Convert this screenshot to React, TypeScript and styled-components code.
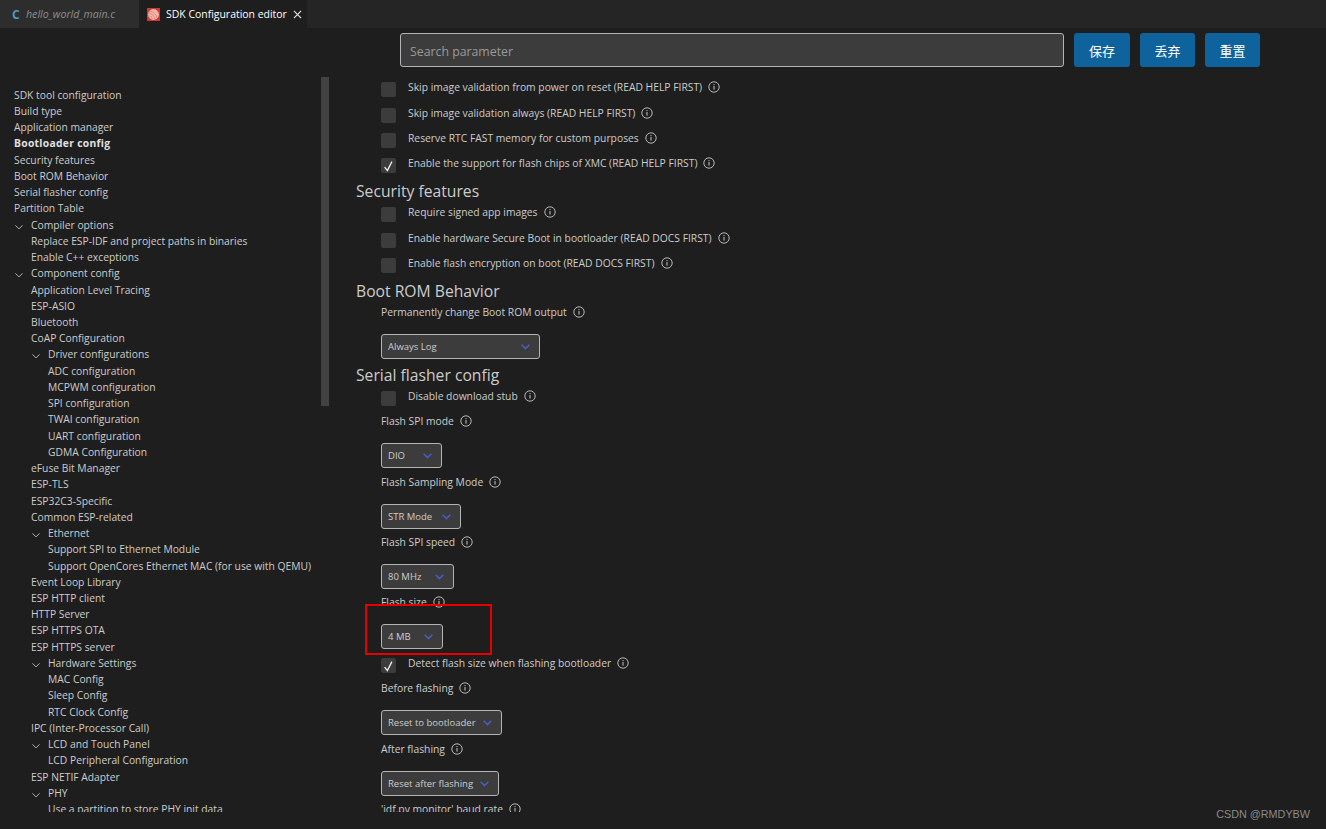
import React from "react";
import styled, { createGlobalStyle } from "styled-components";

const GlobalStyle = createGlobalStyle`
  html, body {
    margin: 0;
    padding: 0;
    height: 100%;
    background: #1e1e1e;
    overflow: hidden;
  }
`;

type TreeItem = { label: string; level: number; open?: boolean; bold?: boolean };

const tree: TreeItem[] = [
  { label: "SDK tool configuration", level: 0 },
  { label: "Build type", level: 0 },
  { label: "Application manager", level: 0 },
  { label: "Bootloader config", level: 0, bold: true },
  { label: "Security features", level: 0 },
  { label: "Boot ROM Behavior", level: 0 },
  { label: "Serial flasher config", level: 0 },
  { label: "Partition Table", level: 0 },
  { label: "Compiler options", level: 1, open: true },
  { label: "Replace ESP-IDF and project paths in binaries", level: 1 },
  { label: "Enable C++ exceptions", level: 1 },
  { label: "Component config", level: 1, open: true },
  { label: "Application Level Tracing", level: 1 },
  { label: "ESP-ASIO", level: 1 },
  { label: "Bluetooth", level: 1 },
  { label: "CoAP Configuration", level: 1 },
  { label: "Driver configurations", level: 2, open: true },
  { label: "ADC configuration", level: 2 },
  { label: "MCPWM configuration", level: 2 },
  { label: "SPI configuration", level: 2 },
  { label: "TWAI configuration", level: 2 },
  { label: "UART configuration", level: 2 },
  { label: "GDMA Configuration", level: 2 },
  { label: "eFuse Bit Manager", level: 1 },
  { label: "ESP-TLS", level: 1 },
  { label: "ESP32C3-Specific", level: 1 },
  { label: "Common ESP-related", level: 1 },
  { label: "Ethernet", level: 2, open: true },
  { label: "Support SPI to Ethernet Module", level: 2 },
  { label: "Support OpenCores Ethernet MAC (for use with QEMU)", level: 2 },
  { label: "Event Loop Library", level: 1 },
  { label: "ESP HTTP client", level: 1 },
  { label: "HTTP Server", level: 1 },
  { label: "ESP HTTPS OTA", level: 1 },
  { label: "ESP HTTPS server", level: 1 },
  { label: "Hardware Settings", level: 2, open: true },
  { label: "MAC Config", level: 2 },
  { label: "Sleep Config", level: 2 },
  { label: "RTC Clock Config", level: 2 },
  { label: "IPC (Inter-Processor Call)", level: 1 },
  { label: "LCD and Touch Panel", level: 2, open: true },
  { label: "LCD Peripheral Configuration", level: 2 },
  { label: "ESP NETIF Adapter", level: 1 },
  { label: "PHY", level: 2, open: true },
  { label: "Use a partition to store PHY init data", level: 2 },
];

const InfoIcon = () => (
  <InfoSvg viewBox="0 0 12 12" width="12" height="12">
    <circle cx="6" cy="6" r="5.2" fill="none" stroke="#c8c8c8" strokeWidth="0.9" />
    <rect x="5.5" y="5" width="1" height="3.6" fill="#c8c8c8" />
    <rect x="5.5" y="3.1" width="1" height="1" fill="#c8c8c8" />
  </InfoSvg>
);

const Chevron = ({ color, size, weight }: { color: string; size: number; weight: number }) => (
  <svg viewBox="0 0 10 10" width={size} height={size}>
    <path d="M1.5 3.4 L5 6.9 L8.5 3.4" fill="none" stroke={color} strokeWidth={weight} />
  </svg>
);

const Check = ({ checked, children }: { checked?: boolean; children: string }) => (
  <CheckRow>
    <CheckBox>
      {checked && (
        <svg viewBox="0 0 16 16" width="16" height="16">
          <path d="M3.6 9.2 L6.4 12.6 L10.9 3.6" fill="none" stroke="#f2f2f2" strokeWidth="1.3" />
        </svg>
      )}
    </CheckBox>
    <CheckText>{children}</CheckText>
    <InfoIcon />
  </CheckRow>
);

const Dropdown = ({
  label,
  value,
  width,
  gap = 3.3,
}: {
  label: string;
  value: string;
  width: number;
  gap?: number;
}) => (
  <DropdownBlock>
    <FieldLabel>
      {label}
      <InfoIcon />
    </FieldLabel>
    <SelectBox $width={width} $gap={gap}>
      <span>{value}</span>
      <Chevron color="#4a5cc0" size={11} weight={1.4} />
    </SelectBox>
  </DropdownBlock>
);

const EspLogo = () => (
  <svg viewBox="0 0 14 14" width="13" height="13">
    <rect width="14" height="14" fill="#cf3a2d" />
    <circle cx="7" cy="7" r="5.8" fill="#f0b6ae" />
    <path d="M3 3.6 A8 8 0 0 1 10.6 11 M2.2 6 A6 6 0 0 1 8.2 12 M2.6 8.6 A3.6 3.6 0 0 1 5.6 11.6" fill="none" stroke="#e07a6c" strokeWidth="0.8" />
  </svg>
);

export default function App() {
  return (
    <Page>
      <GlobalStyle />
      <TabBar>
        <Tab>
          <CIcon>C</CIcon>
          <TabName>hello_world_main.c</TabName>
        </Tab>
        <ActiveTab>
          <EspLogo />
          <ActiveName>SDK Configuration editor</ActiveName>
          <svg viewBox="0 0 10 10" width="9" height="9">
            <path d="M1 1 L9 9 M9 1 L1 9" stroke="#e8e8e8" strokeWidth="1.2" />
          </svg>
        </ActiveTab>
      </TabBar>

      <Toolbar>
        <SearchBox>Search parameter</SearchBox>
        <ActionButton $width={56}>保存</ActionButton>
        <ActionButton $width={55}>丢弃</ActionButton>
        <ActionButton $width={55}>重置</ActionButton>
      </Toolbar>

      <Body>
        <Sidebar>
          <TreeList>
            {tree.map((item) => (
              <TreeRow key={item.label} $level={item.level} $bold={item.bold}>
                {item.open && (
                  <TreeChevron>
                    <Chevron color="#b4b4b4" size={10} weight={1} />
                  </TreeChevron>
                )}
                {item.label}
              </TreeRow>
            ))}
          </TreeList>
          <ScrollThumb />
        </Sidebar>

        <Content>
          <Check>Skip image validation from power on reset (READ HELP FIRST)</Check>
          <Check>Skip image validation always (READ HELP FIRST)</Check>
          <Check>Reserve RTC FAST memory for custom purposes</Check>
          <Check checked>Enable the support for flash chips of XMC (READ HELP FIRST)</Check>
          <Heading>Security features</Heading>
          <Check>Require signed app images</Check>
          <Check>Enable hardware Secure Boot in bootloader (READ DOCS FIRST)</Check>
          <Check>Enable flash encryption on boot (READ DOCS FIRST)</Check>
          <Heading>Boot ROM Behavior</Heading>
          <Dropdown label="Permanently change Boot ROM output" value="Always Log" width={159} />
          <Heading>Serial flasher config</Heading>
          <Check>Disable download stub</Check>
          <Dropdown label="Flash SPI mode" value="DIO" width={61} />
          <Dropdown label="Flash Sampling Mode" value="STR Mode" width={80} />
          <Dropdown label="Flash SPI speed" value="80 MHz" width={73} />
          <Dropdown label="Flash size" value="4 MB" width={62} />
          <Check checked>Detect flash size when flashing bootloader</Check>
          <Dropdown label="Before flashing" value="Reset to bootloader" width={121} gap={3.7} />
          <Dropdown label="After flashing" value="Reset after flashing" width={118} />
          <FieldLabel $indent>
            'idf.py monitor' baud rate
            <InfoIcon />
          </FieldLabel>
        </Content>
      </Body>

      <Highlight />
      <Watermark>CSDN @RMDYBW</Watermark>
    </Page>
  );
}

const uiFont = `"Open Sans", "Noto Sans", "Noto Sans CJK SC", sans-serif`;

const Page = styled.div`
  position: relative;
  width: 1326px;
  height: 829px;
  background: #1e1e1e;
  color: #cccccc;
  font-family: ${uiFont};
  overflow: hidden;
`;

const TabBar = styled.div`
  display: flex;
  height: 28px;
  background: #252526;
`;

const Tab = styled.div`
  display: flex;
  align-items: center;
  width: 139px;
  padding-left: 12px;
  box-sizing: border-box;
  background: #2d2d2d;
`;

const ActiveTab = styled.div`
  display: flex;
  align-items: center;
  width: 168px;
  padding-left: 8px;
  box-sizing: border-box;
  background: #1e1e1e;
  white-space: nowrap;
`;

const CIcon = styled.span`
  width: 14px;
  font-size: 12px;
  font-weight: 700;
  color: #519aba;
`;

const TabName = styled.span`
  font-size: 10.6px;
  font-style: italic;
  color: #8d8d8d;
`;

const ActiveName = styled.span`
  margin: 0 6px 0 6px;
  font-size: 10.45px;
  color: #ffffff;
`;

const Toolbar = styled.div`
  display: flex;
  gap: 10px;
  height: 34px;
  margin-top: 5px;
  padding-left: 400px;
`;

const SearchBox = styled.div`
  display: flex;
  align-items: center;
  width: 664px;
  padding: 2px 0 0 9px;
  box-sizing: border-box;
  background: #3c3c3c;
  border: 1px solid #b4b4b4;
  border-radius: 3px;
  font-size: 12.3px;
  color: #9a9a9a;
`;

const ActionButton = styled.div<{ $width: number }>`
  display: flex;
  align-items: center;
  justify-content: center;
  width: ${(p) => p.$width}px;
  background: #0e639c;
  border-radius: 3px;
  font-size: 13px;
  color: #ffffff;
`;

const Body = styled.div`
  display: flex;
  height: 735px;
  margin-top: 10px;
`;

const Sidebar = styled.div`
  position: relative;
  width: 329px;
  height: 735px;
  overflow: hidden;
`;

const TreeList = styled.div`
  padding-top: 9.72px;
`;

const TreeRow = styled.div<{ $level: number; $bold?: boolean }>`
  position: relative;
  height: 16.235px;
  padding-left: ${(p) => 14 + p.$level * 17}px;
  font-size: 10.3px;
  line-height: 16px;
  white-space: nowrap;
  font-weight: ${(p) => (p.$bold ? 700 : 400)};
  letter-spacing: ${(p) => (p.$bold ? "0.3px" : "0")};
  color: ${(p) => (p.$bold ? "#e0e0e0" : "#cccccc")};
`;

const TreeChevron = styled.span`
  position: absolute;
  top: 3px;
  margin-left: -17px;
`;

const ScrollThumb = styled.div`
  position: absolute;
  top: 0;
  right: 0;
  width: 8px;
  height: 329px;
  background: #424242;
`;

const Content = styled.div`
  flex: 1;
  padding: 0.3px 0 0 27px;
  overflow: hidden;
`;

const CheckRow = styled.div`
  display: flex;
  align-items: flex-start;
  height: 25.3px;
  padding-left: 25px;
  font-size: 10.32px;
  line-height: 20px;
`;

const CheckBox = styled.div`
  flex: none;
  width: 15px;
  height: 15px;
  margin-top: 5px;
  background: #3c3c3c;
  border-radius: 2px;
`;

const CheckText = styled.span`
  margin-left: 12px;
  color: #cccccc;
`;

const InfoSvg = styled.svg`
  flex: none;
  margin: 4px 0 0 6px;
`;

const Heading = styled.div`
  height: 23.8px;
  font-size: 15.7px;
  line-height: 27px;
  color: #cccccc;
`;

const DropdownBlock = styled.div`
  padding-left: 25px;
`;

const FieldLabel = styled.div<{ $indent?: boolean }>`
  display: flex;
  align-items: flex-start;
  height: 32px;
  padding-left: ${(p) => (p.$indent ? 25 : 0)}px;
  font-size: 10.32px;
  line-height: 20px;
  color: #cccccc;
`;

const SelectBox = styled.div<{ $width: number; $gap: number }>`
  display: flex;
  align-items: center;
  justify-content: space-between;
  width: ${(p) => p.$width}px;
  height: 25px;
  margin-bottom: ${(p) => p.$gap}px;
  padding: 0 8px 0 6px;
  box-sizing: border-box;
  background: #3c3c3c;
  border: 1px solid #b4b4b4;
  border-radius: 3px;
  font-size: 9.5px;
  color: #cccccc;
`;

const Highlight = styled.div`
  position: absolute;
  left: 365px;
  top: 604px;
  width: 127px;
  height: 51px;
  box-sizing: border-box;
  border: 2px solid #e60000;
`;

const Watermark = styled.div`
  position: absolute;
  right: 16px;
  bottom: 9px;
  font-family: "Liberation Sans", sans-serif;
  font-size: 10.8px;
  color: #8a8a8a;
`;
